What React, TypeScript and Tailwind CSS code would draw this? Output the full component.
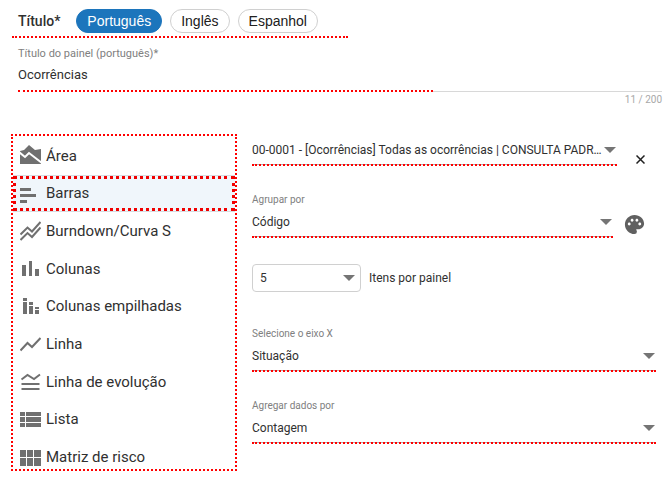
import { useState } from "react";
import type { ReactNode } from "react";
import { MdPalette } from "react-icons/md";

const LANGUAGES = ["Português", "Inglês", "Espanhol"];

const CHARTS: { name: string; icon: ReactNode }[] = [
  {
    name: "Área",
    icon: (
      <>
        <path d="M0 6l4-1 5-5 6 5 6-1v15H0z" />
        <path d="M-1 7l6 5 4-4 13 10" fill="none" stroke="#fff" strokeWidth="2" />
      </>
    ),
  },
  { name: "Barras", icon: <path d="M0 5h11v3H0zM0 11h16v3H0zM0 17h7v3H0z" /> },
  {
    name: "Burndown/Curva S",
    icon: (
      <path
        d="M.5 13.5L7.5 6.5l4.5 4L20.5 1M.5 19l7-7 4.5 4 8.5-9.5"
        fill="none"
        stroke="currentColor"
        strokeWidth="2"
      />
    ),
  },
  { name: "Colunas", icon: <path d="M2 7h4v11H2zM9 3h3v15H9zM15 11h4v7h-4z" /> },
  {
    name: "Colunas empilhadas",
    icon: <path d="M3 2h4v3H3zM3 6h4v12H3zM9 6h4v3H9zM9 10h4v8H9zM15 11h4v2h-4zM15 14h4v4h-4z" />,
  },
  {
    name: "Linha",
    icon: <path d="M.5 16.5l7-7.5 4.5 4L20.5 4" fill="none" stroke="currentColor" strokeWidth="2" />,
  },
  {
    name: "Linha de evolução",
    icon: <path d="M1.5 8.5L7.500 4l6.5 4 6-4.5M1.5 13h18M1.5 18h18" fill="none" stroke="currentColor" strokeWidth="2" />,
  },
  {
    name: "Lista",
    icon: <path d="M0 3h5v4H0zM6 3h15v4H6zM0 8h5v5H0zM6 8h15v5H6zM0 14h5v4H0zM6 14h15v4H6z" />,
  },
  {
    name: "Matriz de risco",
    icon: <path d="M0 3h6v7H0zM7 3h6v7H7zM14 3h7v7h-7zM0 11h6v8H0zM7 11h6v8H7zM14 11h7v8h-7z" />,
  },
];

export default function App() {
  const [language, setLanguage] = useState("Português");
  const [title, setTitle] = useState("Ocorrências");
  const [chart, setChart] = useState("Barras");

  return (
    <main className="bg-white font-[Roboto,sans-serif] text-[#303030]">
      {/* Language tabs */}
      <div className="ml-3 flex w-[336px] items-center border-b-2 border-dotted border-[#ff0000] pt-[9px] pb-[3px] pl-[6px]">
        <span className="mr-4 text-sm font-medium">Título*</span>
        <div className="flex gap-2">
          {LANGUAGES.map((name) => (
            <button
              key={name}
              onClick={() => setLanguage(name)}
              className={`h-6 rounded-full border px-[10px] font-['Liberation_Sans',sans-serif] text-sm leading-5 ${
                name === language
                  ? "border-[#1c75bc] bg-[#1c75bc] text-white"
                  : "border-[#d0d0d0] bg-white text-[#202020]"
              }`}
            >
              {name}
            </button>
          ))}
        </div>
      </div>

      {/* Panel title */}
      <div className="mr-1 ml-[18px] pt-2">
        <label htmlFor="title" className="block text-[11px] leading-4 text-[#808080]">
          Título do painel (português)*
        </label>
        <input
          id="title"
          value={title}
          maxLength={200}
          onChange={(e) => setTitle(e.target.value)}
          className="block h-7 w-full pb-1 text-[13px] outline-none"
        />
        <div className="flex items-center">
          <div className="w-[415px] border-b-2 border-dotted border-[#ff0000]" />
          <div className="flex-1 border-b border-[#d8d8d8]" />
        </div>
        <p className="text-right text-[10px] leading-4 text-[#a8a8a8]">11 / 200</p>
      </div>

      <div className="mt-[26px] mr-[10px] ml-[11px] flex items-start gap-[15px]">
        {/* Chart types */}
        <div className="h-[337px] w-[226px] shrink-0 overflow-hidden border-2 border-dotted border-[#ff0000] pt-px">
          <ul className="grid h-[339px] grid-rows-9">
            {CHARTS.map(({ name, icon }) => (
              <li
                key={name}
                className={name === chart ? "border-y border-[#d8dce0] bg-[#f0f6fb]" : ""}
              >
                <button
                  onClick={() => setChart(name)}
                  className={`flex h-full w-full items-center gap-[5px] text-left text-[15px] ${
                    name === chart ? "border-[3px] border-dotted border-[#f00000] pl-1" : "pl-[7px]"
                  }`}
                >
                  <svg viewBox="0 0 21 21" className="size-[21px] shrink-0 fill-[#707070] text-[#707070]">
                    {icon}
                  </svg>
                  {name}
                </button>
              </li>
            ))}
          </ul>
        </div>

        {/* Data settings */}
        <div className="flex min-w-0 flex-1 flex-col gap-[26px] pt-[2px]">
          <div className="flex items-end gap-[17px]">
            <Field
              id="query"
              value="00-0001 - [Ocorrências] Todas as ocorrências | CONSULTA PADR…"
            />
            <button aria-label="Remover" className="mr-[9px] p-[2px]">
              <svg viewBox="0 0 9 9" className="size-[9px] stroke-[#202020] stroke-[1.5]">
                <path d="M.5.5l8 8M8.5.5l-8 8" />
              </svg>
            </button>
          </div>
          <div className="flex items-end gap-[10px]">
            <Field id="group" label="Agrupar por" value="Código" />
            <button aria-label="Cores" className="mr-[10px] mb-[2px]">
              <MdPalette className="size-[23px] text-[#606060]" />
            </button>
          </div>
          <div className="mb-2 flex items-center gap-2">
            <div className="grid w-[109px] items-center rounded border border-[#d0d0d0] pr-1">
              <select id="items" className="col-start-1 row-start-1 h-[26px] appearance-none pl-[7px] text-xs outline-none">
                <option>5</option>
              </select>
              <Caret />
            </div>
            <label htmlFor="items" className="text-xs">
              Itens por painel
            </label>
          </div>
          <Field id="axis" label="Selecione o eixo X" value="Situação" />
          <Field id="aggregate" label="Agregar dados por" value="Contagem" />
        </div>
      </div>
    </main>
  );
}

function Field({ id, label, value }: { id: string; label?: string; value: string }) {
  return (
    <div className="min-w-0 flex-1">
      {label && (
        <label htmlFor={id} className="block text-[10px] leading-4 text-[#808080]">
          {label}
        </label>
      )}
      <div className="grid items-center border-b border-[#b0b0b0]">
        <select
          id={id}
          aria-label={label ?? "Consulta"}
          className="col-start-1 row-start-1 h-7 w-full appearance-none text-xs outline-none"
        >
          <option>{value}</option>
        </select>
        <Caret />
      </div>
      <div className="-mt-px border-b-2 border-dotted border-[#ff0000]" />
    </div>
  );
}

function Caret() {
  return (
    <svg
      viewBox="0 0 12 6"
      className="pointer-events-none col-start-1 row-start-1 mr-px h-[6px] w-3 justify-self-end fill-[#757575]"
    >
      <path d="M0 0h12L6 6z" />
    </svg>
  );
}
